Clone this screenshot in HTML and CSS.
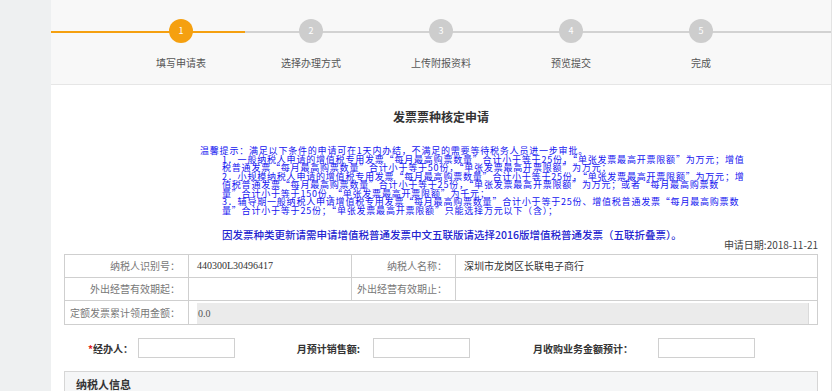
FILE: index.html
```html
<!DOCTYPE html>
<html lang="zh-CN">
<head>
    <meta charset="UTF-8">
    <meta name="viewport" content="width=device-width, initial-scale=1.0">
    <title>发票票种核定申请</title>
    <link rel="stylesheet" href="styles.css">
</head>
<body>
    <div class="page">
        <aside class="side"></aside>
        <main class="main">
            <div class="steps">
                <div class="step active"><span class="dot">1</span><span class="step-name">填写申请表</span></div>
                <div class="step"><span class="dot">2</span><span class="step-name">选择办理方式</span></div>
                <div class="step"><span class="dot">3</span><span class="step-name">上传附报资料</span></div>
                <div class="step"><span class="dot">4</span><span class="step-name">预览提交</span></div>
                <div class="step"><span class="dot">5</span><span class="step-name">完成</span></div>
            </div>

            <div class="content">
                <h1 class="title">发票票种核定申请</h1>

                <div class="notice">
                    <p>温馨提示：满足以下条件的申请可在1天内办结，不满足的需要等待税务人员进一步审批。</p>
                    <p class="item">1．一般纳税人申请的增值税专用发票“每月最高购票数量”合计小于等于25份，“单张发票最高开票限额”为万元；增值<br>税普通发票“每月最高购票数量”合计小于等于50份，“单张发票最高开票限额”为万元；</p>
                    <p class="item">2．小规模纳税人申请的增值税专用发票“每月最高购票数量”合计小于等于25份，“单张发票最高开票限额”为万元；增<br>值税普通发票“每月最高购票数量”合计小于等于25份，“单张发票最高开票限额”为万元；或者“每月最高购票数<br>量”合计小于等于150份，“单张发票最高开票限额”为千元；</p>
                    <p class="item">3．辅导期一般纳税人申请增值税专用发票“每月最高购票数量”合计小于等于25份、增值税普通发票“每月最高购票数<br>量”合计小于等于25份；“单张发票最高开票限额”只能选择万元以下（含）；</p>
                </div>
                <p class="notice-strong">因发票种类更新请需申请增值税普通发票中文五联版请选择2016版增值税普通发票（五联折叠票）。</p>

                <div class="apply-date">申请日期:2018-11-21</div>

                <table class="info">
                    <colgroup>
                        <col class="c-label1">
                        <col class="c-value1">
                        <col class="c-label2">
                        <col>
                    </colgroup>
                    <tr>
                        <td class="label">纳税人识别号：</td>
                        <td class="value code">440300L30496417</td>
                        <td class="label">纳税人名称：</td>
                        <td class="value">深圳市龙岗区长联电子商行</td>
                    </tr>
                    <tr>
                        <td class="label">外出经营有效期起：</td>
                        <td class="value"></td>
                        <td class="label">外出经营有效期止：</td>
                        <td class="value"></td>
                    </tr>
                    <tr>
                        <td class="label">定额发票累计领用金额：</td>
                        <td class="value readonly-cell" colspan="3"><div class="readonly">0.0</div></td>
                    </tr>
                </table>

                <div class="form-row">
                    <label class="f-label f1"><span class="req">*</span>经办人：</label>
                    <input class="f-input" type="text">
                    <label class="f-label f2">月预计销售额:</label>
                    <input class="f-input" type="text">
                    <label class="f-label f3">月收购业务金额预计：</label>
                    <input class="f-input" type="text">
                </div>

                <div class="section">
                    <div class="section-head">纳税人信息</div>
                </div>
            </div>
        </main>
    </div>
</body>
</html>
```

FILE: styles.css
```css
html, body {
    margin: 0;
    padding: 0;
    height: 391px;
    overflow: hidden;
    background: #fff;
    font-family: "Noto Sans CJK SC", "Noto Sans", sans-serif;
    color: #333;
}
.page {
    display: flex;
    height: 391px;
}
.side {
    width: 51px;
    flex: none;
    background: #eef0f1;
}
.main {
    width: 780px;
    flex: none;
    border-right: 1px solid #e3e3e3;
    background: #fff;
}

/* steps */
.steps {
    height: 85px;
    box-sizing: border-box;
    border-bottom: 1px solid #e6e6e6;
    padding-left: 65px;
    display: flex;
    background:
        linear-gradient(#f5a010, #f5a010) 0 31px / 194px 2px no-repeat,
        linear-gradient(#d2d2d2, #d2d2d2) 0 31px / 100% 2px no-repeat,
        #f8f8f8;
}
.step {
    width: 130px;
    display: flex;
    flex-direction: column;
    align-items: center;
}
.dot {
    margin-top: 19px;
    width: 24px;
    height: 24px;
    border-radius: 50%;
    background: #cdcdcd;
    color: #fff;
    font-size: 9px;
    line-height: 24px;
    text-align: center;
}
.step.active .dot {
    background: #f5a010;
}
.step-name {
    margin-top: 14px;
    font-size: 10px;
    line-height: 12px;
    color: #555;
}

/* content */
.content {
    padding: 0 13px;
}
.title {
    margin: 24px 0 0;
    font-size: 12px;
    line-height: 16px;
    text-align: center;
    font-weight: bold;
    color: #333;
}
.notice {
    margin: 22px 0 0 136px;
    color: #1414f0;
    font-size: 9px;
    letter-spacing: 0.8px;
}
.notice p {
    margin: 0;
    line-height: 8.5px;
    white-space: nowrap;
}
.notice .item {
    padding-left: 22px;
}
.notice-strong {
    margin: 0 0 0 158px;
    padding-top: 13px;
    color: #2424d0;
    font-size: 10.5px;
    line-height: 14px;
    font-weight: 500;
    white-space: nowrap;
}
.apply-date {
    text-align: right;
    font-size: 10px;
    line-height: 11px;
    color: #444;
    margin-top: -3px;
}

/* info table */
.info {
    margin-top: 4px;
    width: 100%;
    table-layout: fixed;
    border-collapse: collapse;
    font-size: 10px;
}
.c-label1 { width: 124px; }
.c-value1 { width: 163px; }
.c-label2 { width: 104px; }
.info td {
    border: 1px solid #cfcfcf;
    height: 23px;
    padding: 0 8px;
    box-sizing: border-box;
    white-space: nowrap;
    line-height: 12px;
}
.info .label {
    text-align: right;
    color: #777;
    padding: 0 8px 0 0;
}
.info .value {
    color: #333;
}
.info .code {
    font-family: "Liberation Serif", serif;
    font-size: 10px;
}
.info .readonly-cell {
    padding: 2px 8px 0;
    vertical-align: bottom;
}
.readonly {
    height: 21px;
    line-height: 21px;
    background: #ebebeb;
    border-right: 1px solid #dadada;
    padding-left: 1px;
    font-family: "Liberation Serif", serif;
    font-size: 10px;
    color: #555;
}

/* form row */
.form-row {
    margin-top: 13px;
    display: flex;
    align-items: center;
    height: 20px;
}
.f-label {
    font-size: 10px;
    font-weight: bold;
    color: #333;
    text-align: right;
    white-space: nowrap;
}
.f1 { width: 69px; margin-right: 5px; }
.f2 { width: 125px; margin-right: 13px; }
.f3 { width: 163px; margin-right: 25px; }
.req {
    color: #e02020;
}
.f-input {
    width: 97px;
    height: 20px;
    box-sizing: border-box;
    border: 1px solid #d0d0d0;
    margin: 0;
    padding: 0 4px;
}

/* bottom section */
.section {
    margin-top: 13px;
    border: 1px solid #d6d6d6;
    background: #f5f6f7;
    height: 40px;
}
.section-head {
    padding: 5px 11px;
    font-size: 11px;
    font-weight: bold;
    color: #333;
    line-height: 14px;
}
```
